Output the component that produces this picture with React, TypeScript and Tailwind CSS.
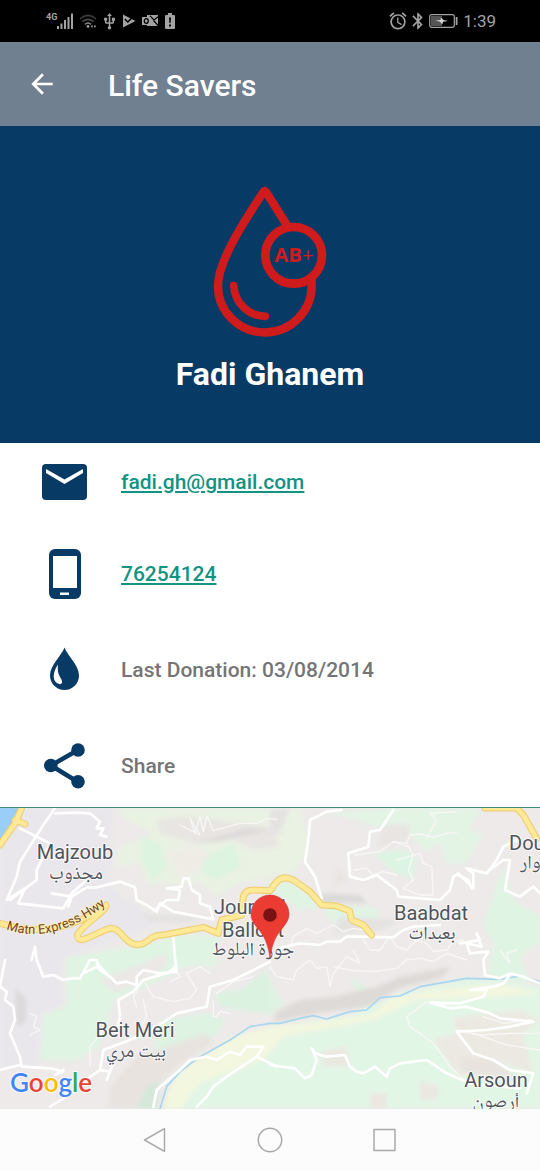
import type { ReactNode } from "react";
import { MdAlarm, MdArrowBack, MdBluetooth, MdUsb } from "react-icons/md";

function StatusBar() {
  return (
    <div className="flex h-[42px] items-center justify-between bg-black pr-[44px] pl-[46px] text-[#a3a3a3]">
      <div className="flex items-center gap-[6px]">
        <div className="flex items-center">
          <span className="self-start text-[9px] leading-[9px] font-bold">4G</span>
          <svg className="h-4 w-4" viewBox="0 0 16 16" fill="currentColor" aria-hidden="true">
            <rect x="0" y="13" width="2" height="3" />
            <rect x="3.5" y="10.5" width="2" height="5.5" />
            <rect x="7" y="7" width="2" height="9" />
            <rect x="10.5" y="4" width="2" height="12" />
            <rect x="14" y="0.5" width="2" height="15.5" />
          </svg>
        </div>
        <svg className="h-4 w-[18px]" viewBox="0 0 20 16" fill="none" strokeWidth="1.8" aria-hidden="true">
          <path d="M1 5.5Q10 -2 19 5.5" stroke="#3d3d3d" />
          <path d="M3.8 8.8Q10 3.4 16.2 8.8" stroke="#4a4a4a" />
          <path d="M6.6 11.8Q10 8.6 13.4 11.8" stroke="#8a8a8a" />
          <circle cx="10" cy="14" r="1.5" fill="#a3a3a3" />
          <path d="M13.5 14h1.8M16.8 14h1.8" stroke="#a3a3a3" />
        </svg>
        <MdUsb className="h-[17px] w-[13px]" viewBox="4 1 16 22" />
        <svg className="h-[14px] w-[14px]" viewBox="0 0 14 14" aria-hidden="true">
          <path d="M1 0.5L13.5 7L1 13.5z" fill="currentColor" />
          <path d="M2.8 5.2L5.8 8L11.2 2.6" fill="none" stroke="#000" strokeWidth="1.6" />
        </svg>
        <svg className="h-[14px] w-[17px]" viewBox="0 0 17 14" aria-hidden="true">
          <path d="M5 1h11v11H5z" fill="currentColor" />
          <path d="M8 2l4 4 4.500-3.500M11.500 6.500L16.500 12" fill="none" stroke="#000" strokeWidth="1.200" />
          <path d="M0 3h9v8H0z" fill="currentColor" />
          <ellipse cx="4.300" cy="7" rx="2" ry="2.300" fill="none" stroke="#000" strokeWidth="1.300" />
        </svg>
        <svg className="h-4 w-[10px]" viewBox="0 0 10 16" aria-hidden="true">
          <path d="M3 0h4v2h2q1 0 1 1v12q0 1-1 1H1q-1 0-1-1V3q0-1 1-1h2z" fill="currentColor" />
          <path d="M4 4.500h2l-.4 5.500h-1.200zM4 11.500h2v2H4z" fill="#000" />
        </svg>
      </div>
      <div className="flex items-center gap-[5px]">
        <MdAlarm className="h-[18px] w-[18px]" viewBox="1.500 1.500 21 21" />
        <MdBluetooth className="h-[18px] w-3" viewBox="5 1 14 22" />
        <svg className="h-[14px] w-[29px]" viewBox="0 0 29 14" aria-hidden="true">
          <rect x="0.700" y="0.700" width="24.600" height="12.600" rx="2" fill="none" stroke="currentColor" strokeWidth="1.200" />
          <rect x="2" y="2" width="11" height="10" fill="#555" />
          <path d="M6.500 6.500l5-.5.5-2.500 2.500 2.500 4.500 1-5 .8-.7 2.700-2.300-2.700z" fill="#d4d4d4" />
          <rect x="26.700" y="3" width="1.800" height="8" fill="currentColor" />
        </svg>
        <time className="text-[17px] leading-5">1:39</time>
      </div>
    </div>
  );
}

function BloodDrop() {
  return (
    <svg className="h-[155px] w-[120px]" viewBox="150 37 360 465" fill="none" stroke="#d01b1d" strokeLinecap="round" strokeLinejoin="round" role="img" aria-label="Blood type">
      <path d="M381 164L318 64Q314 58 310 64C270 126 174 265 174 345A140 140 0 0 0 455 345Q456 338 454 326" strokeWidth="25" />
      <circle cx="401" cy="254" r="85" strokeWidth="26" />
      <path d="M221 345C224 395 265 437 316 437" strokeWidth="23" />
      <text x="402" y="275" textAnchor="middle" fill="#d01b1d" stroke="none" fontSize="61" fontWeight="700" fontFamily="'Open Sans', 'Noto Sans', sans-serif">
        AB<tspan fontWeight="400">+</tspan>
      </text>
    </svg>
  );
}

function Row({ icon, className, children }: { icon: ReactNode; className?: string; children: ReactNode }) {
  return (
    <li className={`flex h-[46px] items-center ${className ?? ""}`}>
      <span className="flex w-[129px] shrink-0 justify-center text-[#083a66]">{icon}</span>
      <span className="-ml-2 text-[21px] leading-6 font-medium text-[#757575]">{children}</span>
    </li>
  );
}

const minorRoads = [
  "M540 75L600 105L570 55L585 100L600 50L610 95L620 48L640 92L720 70L770 70L800 55L830 58",
  "M1065 165L1140 155L1180 125L1220 130L1230 105L1260 102L1300 112L1340 100L1370 98",
  "M1180 125L1225 140L1240 165L1225 210L1240 240L1210 265L1260 285L1300 285L1295 200L1270 190L1260 160L1190 180",
  "M1280 115L1310 60L1290 40L1370 35",
  "M1060 210L1100 205L1120 225L1150 215L1190 225",
  "M870 440L880 410L920 385L950 400L1000 375L1030 395L1060 385L1120 395",
  "M810 500L830 530L880 540L890 510L930 480L950 505L980 500L990 560L1000 520L1040 470L1080 490L1060 450",
  "M1090 420L1110 450L1140 450L1170 410L1190 440L1220 450L1250 420L1280 430L1300 455L1340 450L1360 425L1390 420",
  "M1000 500L1060 512L1120 515L1190 505L1220 480L1260 475L1300 485L1340 460L1400 480",
  "M435 550L460 590L520 605L570 595L590 570L560 520L600 500L630 520M520 500L540 530L510 545",
  "M410 620L400 590L415 570M430 600L440 650L420 690M640 600L640 650L650 650L660 635L690 640",
  "M1280 605L1220 650L1230 680L1300 730L1330 770L1350 800L1385 830",
  "M1370 690L1440 705L1530 700L1620 700M1420 700L1520 735L1620 750M1450 650L1510 670L1590 660",
  "M90 640L110 650L100 680L120 690L90 705M270 800L270 740L310 690",
  "M1500 450L1530 490L1520 460L1550 450M650 580L700 545L760 530",
];

const roads = [
  "M165 24L130 75L60 185L50 230L20 300L75 265L55 310L190 325L215 280L260 240M155 280L215 290L205 320",
  "M60 85L150 130L110 210L110 240L30 300",
  "M165 40L230 38L270 40L300 65L290 85L310 85L300 105L320 110",
  "M215 290L260 262L290 262L360 245L405 262L410 300L440 315L470 335L480 310L520 335L640 358L630 320L600 310L600 285L575 270L565 235L550 235L545 260L500 265L540 270L535 300L500 300L470 325",
  "M520 410L525 475L530 515L480 520L430 510L410 530L410 555L380 545L350 550L330 530L300 510L290 480L270 480L240 535L215 535L190 540L160 525L130 530L110 480L105 440L95 480",
  "M290 490L330 530L290 500L250 520",
  "M15 480L0 560L20 575L15 600L40 620L45 660L30 700L60 770L65 800L150 805L190 815L165 825L190 810",
  "M0 810L60 795M150 920L200 890L190 850L250 845L300 810L310 750L390 720L470 680L530 640L620 620L630 560L700 540L810 485",
  "M530 500L500 520L430 540L400 575L355 600L360 650L350 700",
  "M300 810L330 815L320 840L340 790",
  "M1025 30L980 35L930 60L925 120L915 185L945 230L965 295",
  "M1180 30L1140 90L1110 95L1105 140L1045 160L1050 230L1090 240L1130 225L1190 270L1195 290L1320 300L1350 270L1360 230L1375 220L1420 265L1420 220L1400 205L1460 220L1490 180L1510 140L1560 115",
  "M1375 225L1405 240L1415 265M1470 210L1510 180L1530 180L1515 270L1560 290L1600 260L1620 280",
  "M830 445L900 430L960 435L980 425L1020 425L1040 410L1080 410L1180 412L1210 390L1240 380L1320 375",
  "M1380 430L1440 420L1430 400L1445 440L1400 430L1410 460L1465 455L1450 480L1455 525L1500 535L1530 520L1570 530L1620 550",
  "M1530 525L1510 550L1480 560L1410 570L1460 570L1450 590L1380 610L1290 608L1350 625L1400 620L1470 640L1500 655L1600 665L1530 680L1460 690L1370 695L1420 760L1480 780L1530 810L1600 820L1580 880",
  "M810 795L885 805L915 835L935 825L950 780L935 745L945 760L980 770L1035 765L1050 800L1070 815L1090 820L1125 800L1160 830L1170 805L1200 790L1240 785L1280 780L1340 820L1410 850L1560 865",
  "M460 920L470 870L540 810L570 780L620 770L650 780L690 755L720 765L740 740L790 740L770 770L680 830L640 860L620 890L590 920",
  "M770 770L830 800",
];

const highways = [
  "M0 370L60 385C160 400 245 370 318 315C320 335 250 370 232 405C235 440 280 400 330 385C365 382 370 430 410 434C450 435 440 405 490 405L610 382L655 400L665 360L725 345L730 290Q735 270 760 270L810 272L830 245Q850 225 880 240L930 275L965 315L1010 318L1048 332L1055 360L1090 375L1115 405",
  "M1455 24L1550 24L1570 45L1610 115",
  "M65 24L45 70L0 135M45 60L75 72",
];

function Label({ x, y, name, arX, arY, ar, anchor = "middle" }: { x: number; y: number; name: string; arX: number; arY: number; ar: string; anchor?: "middle" | "start" }) {
  return (
    <g textAnchor={anchor}>
      <text x={x} y={y} fontSize="20">{name}</text>
      <text x={arX} y={arY} fontSize="19" fontFamily="'Noto Naskh Arabic UI', 'Noto Sans Arabic', 'DejaVu Sans', sans-serif">{ar}</text>
    </g>
  );
}

function MapView() {
  return (
    <svg className="block w-full border-t border-[#3f8f7c]" viewBox="0 0 540 301" role="img" aria-label="Map">
      <defs>
        <filter id="soft" x="-10%" y="-10%" width="120%" height="120%">
          <feGaussianBlur stdDeviation="6" />
        </filter>
        <path id="hwy" d="M6 121Q52 138 106 97" />
      </defs>
      <rect width="540" height="301" fill="#edeae9" />
      <g transform="translate(0 -8) scale(.33333)" fill="none" strokeLinecap="round" strokeLinejoin="round">
        <g filter="url(#soft)">
          <path d="M0 24H340L330 260L480 370L180 480L190 620L110 800L0 800z" fill="#eae7ec" />
          <path d="M350 24H900L930 150L880 220L720 250L650 290L600 250L440 250L420 190L340 200L360 140L460 100L380 60z" fill="#e9f2e3" />
          <path d="M420 110L480 130L500 200L460 240L430 190zM580 190L700 130L720 200L640 240z" fill="#dcf4e0" />
          <path d="M470 60L560 50L810 80L840 140L760 150L700 120L590 130L480 100z" fill="#e8e5e2" />
          <path d="M500 150L580 135L630 160L600 210L550 240L520 210z" fill="#efece6" />
          <path d="M200 470L400 440L520 410L640 440L520 520L400 580L340 600L300 740L230 780L120 780L130 640L200 620z" fill="#e0f4e3" />
          <path d="M300 540L400 500L500 460L500 500L400 560L340 580z" fill="#ebe8e6" />
          <path d="M500 400L660 410L650 500L540 500z" fill="#e0f4e3" />
          <path d="M790 250L880 245L960 320L900 330L840 290z" fill="#e0f4e3" />
          <path d="M970 40L1180 24L1440 24L1390 120L1270 150L1200 70L1130 80L1040 50z" fill="#e3f4e5" />
          <path d="M1120 160L1210 150L1250 170L1240 235L1180 215z" fill="#dcf5e2" />
          <path d="M1330 80L1450 100L1400 190L1330 190z" fill="#e3f4e5" />
          <path d="M960 310L1130 325L1140 360L1080 380L990 360z" fill="#e0f4e3" />
          <path d="M1510 200L1540 300L1620 350L1620 430L1560 470L1590 550L1460 540L1480 430L1450 370z" fill="#e0f4e3" />
          <path d="M640 580L720 570L800 510L830 580L810 640L720 630L660 620z" fill="#dcf2e1" />
          <path d="M490 660L620 640L680 660L600 760L500 780L460 740z" fill="#def3e2" />
          <path d="M810 540L850 610L810 650zM1050 530L1110 570L1090 610z" fill="#def3e3" />
          <path d="M490 926L520 830L650 745L810 680L1050 645L1200 580L1400 535L1620 560L1620 926z" fill="#e2f6e6" />
          <path d="M510 860L560 800L700 710L800 680L1000 660L1120 640L1170 595L1300 570L1500 550L1620 580L1500 590L1250 600L1120 660L850 710L790 780L600 850L540 926L490 926z" fill="#f3f7df" />
          <path d="M830 635L900 600L1000 590L1130 560L1200 530L1350 500L1330 530L1200 565L1100 620L950 640L820 665z" fill="#dedad7" />
          <path d="M330 860L410 770L500 740L620 700L640 730L540 790L480 850L460 926L330 926z" fill="#e8e3df" />
          <path d="M440 860L480 840L470 926H410z" fill="#d5e8da" />
          <path d="M1360 650L1560 630L1620 660L1570 700L1600 820L1480 780L1380 830L1300 720L1370 700z" fill="#ece9e2" />
          <path d="M1380 770L1480 780L1560 840L1390 820z" fill="#e8e3de" />
          <path d="M960 755L1040 740L1050 800L970 800zM1260 840L1320 860L1310 900L1260 900zM1110 880H1160V926H1110z" fill="#eae8e1" />
          <path d="M580 130L640 115L740 85L810 90L740 105L650 125zM960 280L1080 285L1100 310L970 310zM45 560L80 600L75 670L50 680z" fill="#dcd9d9" />
          <path d="M420 340L640 350L560 370L440 365zM1020 350L1200 360L1140 390L1000 400z" fill="#e5e2e2" />
          <path d="M810 30L870 24L840 100L810 110z" fill="#e5e2e2" />
          <path d="M1150 80L1230 70L1220 130L1130 140zM1010 200L1050 240L1000 260z" fill="#e8e5e3" />
        </g>
        <path d="M0 24H70L45 75L0 130z" fill="#9bcdf9" />
        <g stroke="#f9f7f6" strokeWidth="4">
          {minorRoads.map((d) => <path key={d} d={d} />)}
        </g>
        <path d="M480 926L500 860L540 815L600 770L690 720L750 680L810 670L840 670L900 655L940 647L980 657L1050 635L1100 630L1140 593L1200 588L1260 560L1400 535L1500 538L1560 528L1620 544" stroke="#a9d6ee" strokeWidth="5" />
        <g stroke="#fff" strokeWidth="8">
          {roads.map((d) => <path key={d} d={d} />)}
        </g>
        <g stroke="#efcf76" strokeWidth="21">
          {highways.map((d) => <path key={d} d={d} />)}
        </g>
        <g stroke="#fde996" strokeWidth="14">
          {highways.map((d) => <path key={d} d={d} />)}
        </g>
      </g>
      <g fill="#4f545b" stroke="#fff" strokeOpacity="0.8" strokeWidth="2" paintOrder="stroke" strokeLinejoin="round" fontFamily="Roboto, sans-serif">
        <Label x={75} y={51} name="Majzoub" arX={76} arY={74} ar="مجذوب" />
        <Label x={509} y={42} name="Douar" arX={520} arY={63} ar="الدوار" anchor="start" />
        <Label x={431} y={112} name="Baabdat" arX={432} arY={134} ar="بعبدات" />
        <Label x={135} y={229} name="Beit Meri" arX={136} arY={252} ar="بيت مري" />
        <Label x={496} y={279} name="Arsoun" arX={496} arY={302} ar="أرصون" />
        <text x="214" y="106" fontSize="20">Jouret il</text>
        <Label x={253} y={129} name="Ballout" arX={253} arY={150} ar="جورة البلوط" />
        <text fontSize="13" fill="#74451d" stroke="#fdf3c4">
          <textPath href="#hwy">Matn Express Hwy</textPath>
        </text>
      </g>
      <path d="M270 150C268.500 139 265.500 130 259.500 122.500C254 116 251 112 251 106A19 19 0 0 1 289 106C289 112 286 116 280.500 122.500C274.500 130 271.500 139 270 150z" fill="#ea3c32" stroke="#c9352c" strokeWidth="0.500" />
      <circle cx="270" cy="107" r="6.800" fill="#7b1212" />
      <text x="10" y="284" fontSize="26" fontFamily="Lato, sans-serif" fontWeight="600" stroke="#fff" strokeOpacity="0.8" strokeWidth="2" paintOrder="stroke">
        <tspan fill="#4285f4">G</tspan><tspan fill="#ea4335">o</tspan><tspan fill="#fbbc05">o</tspan><tspan fill="#4285f4">g</tspan><tspan fill="#34a853">l</tspan><tspan fill="#ea4335">e</tspan>
      </text>
    </svg>
  );
}

function NavBar() {
  return (
    <nav className="flex min-h-[61px] grow items-center justify-center gap-[75px] bg-[#fcfcfc] text-[#a9a9a9]">
      <button type="button" aria-label="Back" className="flex w-10 justify-center">
        <svg className="h-[26px] w-[26px]" viewBox="0 0 26 26" fill="none" stroke="currentColor" strokeWidth="1.500" strokeLinejoin="round">
          <path d="M22.500 1.700V24.300L2.500 13z" />
        </svg>
      </button>
      <button type="button" aria-label="Home" className="flex w-10 justify-center">
        <svg className="h-[26px] w-[26px]" viewBox="0 0 26 26" fill="none" stroke="currentColor" strokeWidth="1.500">
          <circle cx="13" cy="13" r="11.700" />
        </svg>
      </button>
      <button type="button" aria-label="Recent apps" className="flex w-10 justify-center">
        <svg className="h-[26px] w-[26px]" viewBox="0 0 26 26" fill="none" stroke="currentColor" strokeWidth="1.500">
          <rect x="2" y="2.500" width="21" height="21" rx="0.500" />
        </svg>
      </button>
    </nav>
  );
}

export default function App() {
  return (
    <div className="flex min-h-screen flex-col bg-white font-[Roboto,sans-serif]">
      <StatusBar />
      <header className="flex h-[84px] items-center bg-[#708090] pt-1 pl-[26px] text-white">
        <button type="button" aria-label="Back" className="flex pb-1">
          <MdArrowBack className="h-8 w-8" />
        </button>
        <h1 className="ml-[50px] text-[30px] leading-9 font-medium">Life Savers</h1>
      </header>
      <section className="flex h-[317px] flex-col items-center bg-[#083a66] pt-[57px]">
        <BloodDrop />
        <h2 className="mt-4 text-[32px] leading-10 font-bold text-white">Fadi Ghanem</h2>
      </section>
      <ul className="flex flex-col pt-4 pb-[18px]">
        <Row
          icon={
            <svg className="h-9 w-[45px]" viewBox="0 0 45 36" aria-hidden="true">
              <rect width="45" height="36" rx="4" fill="currentColor" />
              <path d="M4 5L22.500 15.500L41 5V9L22.500 20L4 9z" fill="#fff" />
            </svg>
          }
        >
          <a href="mailto:fadi.gh@gmail.com" className="text-[#129482] underline">fadi.gh@gmail.com</a>
        </Row>
        <Row
          className="mt-[46px]"
          icon={
            <svg className="h-[50px] w-8" viewBox="0 0 32 50" aria-hidden="true">
              <rect width="32" height="50" rx="6" fill="currentColor" />
              <path d="M4 7H28V39H4zM11 43.500H20V46H11z" fill="#fff" />
            </svg>
          }
        >
          <a href="tel:76254124" className="text-[#129482] underline">76254124</a>
        </Row>
        <Row
          className="mt-[50px]"
          icon={
            <svg className="h-[46px] w-[29px]" viewBox="0 0 29 46" aria-hidden="true">
              <path d="M14.500 0.500C17 8 29 18 29 28.500A14.500 14.500 0 0 1 0 28.500C0 18 12 8 14.500 0.500z" fill="currentColor" />
              <path d="M8 17.500C2 26 2 36 10 37.200C13.500 36.500 12 33 10 30C7.500 26 7.500 22 8 17.500z" fill="#fff" />
            </svg>
          }
        >
          Last Donation: 03/08/2014
        </Row>
        <Row
          className="mt-[50px]"
          icon={
            <svg className="h-[46px] w-[41px]" viewBox="0 0 41 46" aria-hidden="true">
              <path d="M34 7L7 22.500L34 39" fill="none" stroke="currentColor" strokeWidth="4.500" />
              <circle cx="34" cy="7" r="6.800" fill="currentColor" />
              <circle cx="6.800" cy="22.500" r="6.800" fill="currentColor" />
              <circle cx="34" cy="38.800" r="6.800" fill="currentColor" />
            </svg>
          }
        >
          <button type="button">Share</button>
        </Row>
      </ul>
      <MapView />
      <NavBar />
    </div>
  );
}
